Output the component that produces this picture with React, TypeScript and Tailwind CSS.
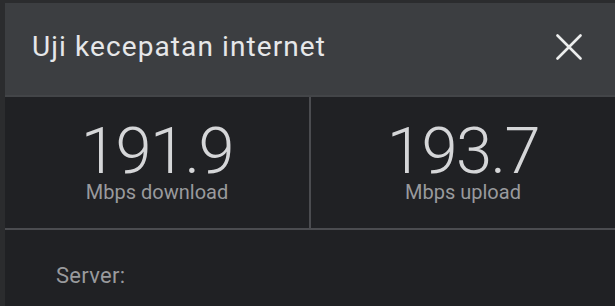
import React from "react";

const Stat = ({ value, label, divider }: { value: string; label: string; divider?: boolean }) => (
  <div
    className={`flex flex-1 flex-col items-center pt-[24px] ${divider ? "border-r-2 border-[#4b4c50]" : ""}`}
  >
    <span className="text-[65px] font-light leading-[60px] tracking-[-1.5px] text-[#d5d6d8]">
      {value}
    </span>
    <span className="mt-[1px] text-[20px] leading-[20px] text-[#999a9d]">{label}</span>
  </div>
);

const App = () => {
  return (
    <div className="h-[306px] w-[615px] overflow-hidden bg-[#2b2c2e] pl-[5px] pt-[3px] font-['Roboto',sans-serif]">
      <div className="flex h-full flex-col bg-[#202124]">
        <div className="flex h-[94px] items-center justify-between border-b-2 border-[#434548] bg-[#3c3e41] pb-[5px] pl-[27px] pr-[33px]">
          <h1 className="text-[28px] font-normal leading-none tracking-[1.1px] text-[#e6e7e9]">
            Uji kecepatan internet
          </h1>
          <svg width="26" height="26" viewBox="0 0 26 26" className="text-[#eceded]">
            <path d="M1.5 1.5 L24.5 24.5 M24.5 1.5 L1.5 24.5" stroke="currentColor" strokeWidth="2.6" strokeLinecap="round" />
          </svg>
        </div>
        <div className="flex h-[133px] border-b-2 border-[#4b4c50]">
          <Stat value="191.9" label="Mbps download" divider />
          <Stat value="193.7" label="Mbps upload" />
        </div>
        <div className="pl-[51px] pt-[35px]">
          <span className="text-[22px] leading-[22px] tracking-[0.3px] text-[#999a9d]">Server:</span>
        </div>
      </div>
    </div>
  );
};

export default App;
